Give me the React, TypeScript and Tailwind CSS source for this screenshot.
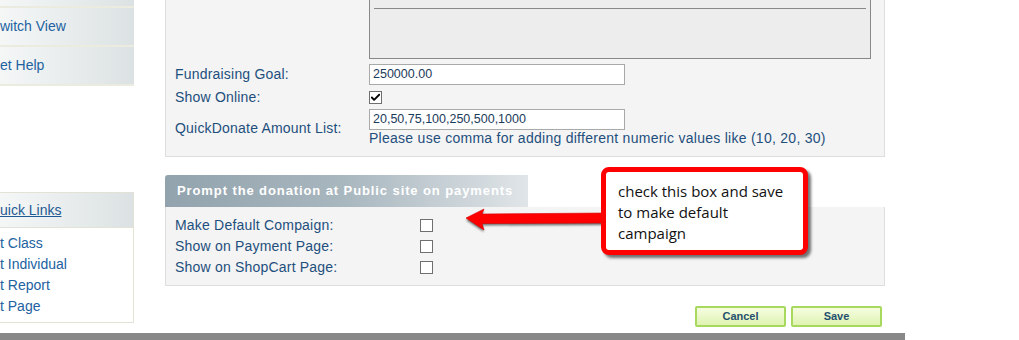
import { Check } from 'lucide-react'

const label = 'text-[14px] tracking-[0.2px] text-[#1e4f7d]'
const navItem =
  'flex h-[37px] items-center bg-gradient-to-r from-[#f5f7f7] to-[#dce2e3] text-[14px] text-[#2262a0]'

function Box({ checked = false }: { checked?: boolean }) {
  return (
    <span className="flex h-[13px] w-[13px] items-center justify-center border border-[#6f6f6f] bg-white">
      {checked && <Check className="h-[11px] w-[11px] text-black" strokeWidth={4} />}
    </span>
  )
}

function Sidebar() {
  return (
    <div className="flex w-[134px] shrink-0 flex-col">
      <div className="h-[6px] bg-gradient-to-r from-[#f5f7f7] to-[#dce2e3]" />
      <div className="h-[2px] bg-[#ebebdf]" />
      <div className={navItem}>witch View</div>
      <div className="h-[2px] bg-[#ebebdf]" />
      <div className={navItem}>et Help</div>
      <div className="h-[2px] bg-[#ebebdf]" />

      <div className="mt-[106px] border border-l-0 border-[#e2e2d6] bg-white">
        <div className="flex h-[34px] items-center bg-gradient-to-r from-[#f5f7f7] to-[#dce2e3] text-[14px] text-[#1f5a94] underline">
          uick Links
        </div>
        <div className="flex flex-col border-t border-[#e2e2d6] pb-[5px] pt-[5px] text-[14px] leading-[21px] text-[#2262a0]">
          <span>t Class</span>
          <span>t Individual</span>
          <span>t Report</span>
          <span>t Page</span>
        </div>
      </div>
    </div>
  )
}

function TopPanel() {
  return (
    <div className="h-[157px] border border-t-0 border-[#dedede] bg-[#f4f4f4] pl-[9px]">
      <div className="ml-[194px] h-[59px] w-[502px] border border-t-0 border-[#888] bg-[#ededed] px-[4px] pt-[8px]">
        <div className="h-px bg-[#888]" />
      </div>

      <div className="mt-[5px] flex h-[21px] items-center">
        <span className={`w-[194px] ${label}`}>Fundraising Goal:</span>
        <div className="flex h-[21px] w-[256px] items-center border border-[#a9a9a9] bg-white px-[3px] text-[12.5px] text-[#1b3b5a]">
          250000.00
        </div>
      </div>

      <div className="mt-[2px] flex h-[21px] items-center">
        <span className={`w-[194px] ${label}`}>Show Online:</span>
        <Box checked />
      </div>

      <div className="mt-px flex items-center">
        <span className={`w-[194px] ${label}`}>QuickDonate Amount List:</span>
        <div className="flex flex-col">
          <div className="flex h-[21px] w-[256px] items-center border border-[#a9a9a9] bg-white px-[3px] text-[12.5px] text-[#1b3b5a]">
            20,50,75,100,250,500,1000
          </div>
          <span className="text-[14px] leading-[17px] tracking-[0.27px] text-[#1e4f7d]">
            Please use comma for adding different numeric values like (10, 20, 30)
          </span>
        </div>
      </div>
    </div>
  )
}

function PromptPanel() {
  const rows = ['Make Default Compaign:', 'Show on Payment Page:', 'Show on ShopCart Page:']
  return (
    <div className="mt-[18px]">
      <div className="flex h-[32px] w-[363px] items-center rounded-tl-[3px] bg-gradient-to-r from-[#92a3ad] via-[#a9b7bf] to-[#e0e5e8] pl-[12px] text-[13px] font-bold tracking-[0.9px] text-white">
        Prompt the donation at Public site on payments
      </div>
      <div className="border border-t-0 border-[#dedede] bg-[#f4f4f4] pb-[7px] pl-[9px] pt-[8px]">
        {rows.map((r) => (
          <div key={r} className="flex h-[21px] items-center">
            <span className={`w-[245px] ${label}`}>{r}</span>
            <Box />
          </div>
        ))}
      </div>
    </div>
  )
}

function Buttons() {
  const btn =
    'flex h-[21px] w-[91px] items-center justify-center rounded-[2px] border-2 border-[#a6d95e] bg-gradient-to-b from-[#f6fde0] to-[#dff3b2] text-[11px] font-bold text-[#24506f]'
  return (
    <div className="mt-[20px] flex justify-end gap-[5px] pr-[3px]">
      <button className={btn}>Cancel</button>
      <button className={btn}>Save</button>
    </div>
  )
}

function Callout() {
  return (
    <>
      <svg className="absolute left-[458px] top-[203px]" width="150" height="34" viewBox="0 0 150 34">
        <defs>
          <filter id="sh" x="-10%" y="-30%" width="130%" height="180%">
            <feGaussianBlur stdDeviation="1.2" />
          </filter>
        </defs>
        <polygon
          points="8,17 26,8 24,13 148,12 148,22 24,22.5 26,29"
          fill="#000"
          opacity="0.55"
          filter="url(#sh)"
        />
        <polygon points="8,15 26,6 24,11 148,10 148,20 24,20.5 26,27" fill="#ff0000" stroke="#d40000" strokeWidth="0.6" />
      </svg>
      <div className="absolute left-[601px] top-[167px] h-[88px] w-[207px] rounded-[8px] border-[5px] border-[#ff0000] bg-white pl-[12px] pt-[9px] shadow-[3px_3px_3px_rgba(0,0,0,0.55)]">
        <p className="text-[15px] leading-[21px] text-[#111]" style={{ fontFamily: '"Open Sans", sans-serif' }}>
          check this box and save
          <br />
          to make default
          <br />
          campaign
        </p>
      </div>
    </>
  )
}

export default function App() {
  return (
    <div
      className="relative h-[340px] w-[1019px] overflow-hidden bg-white"
      style={{ fontFamily: '"Liberation Sans", Arial, sans-serif' }}
    >
      <div className="flex h-[333px] gap-[31px]">
        <Sidebar />
        <div className="w-[720px] shrink-0">
          <TopPanel />
          <PromptPanel />
          <Buttons />
        </div>
      </div>
      <div className="h-[7px] w-[905px] bg-[#888]" />
      <Callout />
    </div>
  )
}
